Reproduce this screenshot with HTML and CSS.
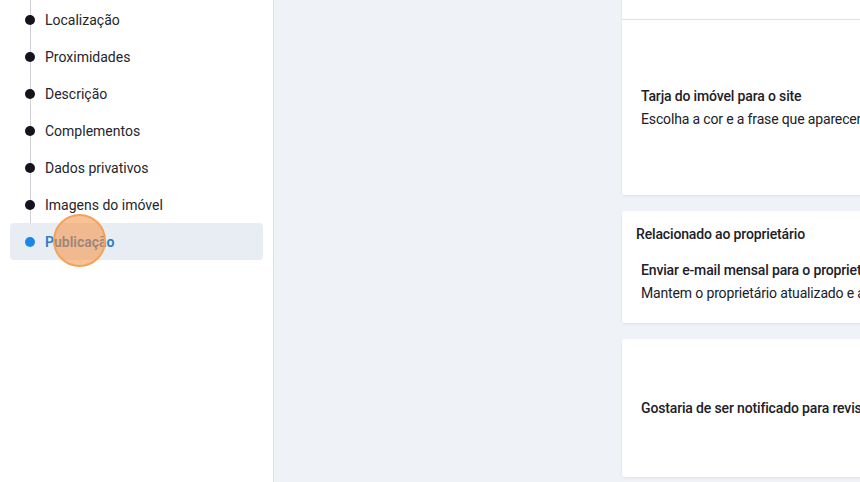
FILE: index.html
```html
<!DOCTYPE html>
<html lang="pt">
<head>
<meta charset="utf-8">
<link rel="stylesheet" href="styles.css">
</head>
<body>
<div class="app">
  <aside class="sidebar">
    <ul class="steps">
      <li class="step">Localização</li>
      <li class="step">Proximidades</li>
      <li class="step">Descrição</li>
      <li class="step">Complementos</li>
      <li class="step">Dados privativos</li>
      <li class="step">Imagens do imóvel</li>
      <li class="step active">Publicação</li>
    </ul>
    <span class="click-mark"></span>
  </aside>
  <main class="main">
    <section class="card card-top">
      <div class="card-head"><span class="cut-text">Destaque do imóvel no site e nos portais</span></div>
      <div class="card-body centered">
        <div class="option">
          <div class="opt-title">Tarja do imóvel para o site</div>
          <div class="opt-desc">Escolha a cor e a frase que aparecerá sobre a foto do imóvel</div>
        </div>
      </div>
    </section>
    <section class="card card-owner">
      <div class="section-title">Relacionado ao proprietário</div>
      <div class="option">
        <div class="opt-title">Enviar e-mail mensal para o proprietário</div>
        <div class="opt-desc">Mantem o proprietário atualizado e ativo</div>
      </div>
    </section>
    <section class="card card-notify centered">
      <div class="option">
        <div class="opt-title">Gostaria de ser notificado para revisar este imóvel?</div>
      </div>
    </section>
  </main>
</div>
</body>
</html>
```
FILE: styles.css
```css
* { box-sizing: border-box; }
html, body { margin: 0; padding: 0; }
body {
  width: 860px;
  height: 482px;
  overflow: hidden;
  font-family: Roboto, "Liberation Sans", sans-serif;
  color: #202028;
  background: #eff2f7;
}
.app {
  display: flex;
  height: 482px;
}
.sidebar {
  position: relative;
  width: 274px;
  flex: none;
  background: #fff;
  border-right: 1px solid #dcdfe4;
}
.steps {
  list-style: none;
  margin: 0;
  padding: 1px 10px 0;
}
.step {
  position: relative;
  display: flex;
  align-items: center;
  gap: 10px;
  height: 37px;
  padding-left: 15px;
  font-size: 14px;
  color: #25252c;
  border-radius: 4px;
}
.step::before {
  content: "";
  width: 10px;
  height: 10px;
  border-radius: 50%;
  background: #16131d;
  flex: none;
  position: relative;
  z-index: 1;
}
.step::after {
  content: "";
  position: absolute;
  left: 20px;
  top: 0;
  bottom: -18px;
  width: 1px;
  background: #cdd0d5;
}
.step:first-child::after { top: -2px; }
.step.active::after { display: none; }
.step.active {
  background: #e8edf4;
  color: #2f7cc4;
  font-weight: 600;
}
.step.active::before { background: #1a86e8; }
.click-mark {
  position: absolute;
  left: 53px;
  top: 214px;
  width: 53px;
  height: 53px;
  border-radius: 50%;
  background: rgba(245, 142, 60, 0.55);
  border: 2px solid #f4a25a;
}
.main {
  flex: 1;
  padding-left: 348px;
  display: flex;
  flex-direction: column;
  gap: 16px;
  overflow: hidden;
}
.card {
  background: #fff;
  width: 520px;
  box-shadow: 0 1px 3px rgba(30, 40, 60, 0.08);
  border-radius: 2px;
  letter-spacing: -0.15px;
}
.card-top {
  margin-top: -40px;
  height: 235px;
  display: flex;
  flex-direction: column;
}
.card-head {
  height: 60px;
  border-bottom: 1px solid #dfe1e4;
  padding: 24px 0 0 20px;
  font-size: 14px;
  color: #c4c4c4;
}
.cut-text { opacity: 0.4; }
.card-body {
  flex: 1;
}
.centered {
  display: flex;
  align-items: center;
}
.option {
  padding-left: 19px;
}
.opt-title {
  font-size: 14px;
  font-weight: 500;
  line-height: 23px;
  white-space: nowrap;
}
.opt-desc {
  font-size: 14px;
  line-height: 23px;
  white-space: nowrap;
}
.card-owner {
  height: 112px;
  padding-top: 12px;
}
.section-title {
  padding-left: 14px;
  font-size: 14px;
  font-weight: 500;
  line-height: 22px;
  margin-bottom: 14px;
}
.card-notify {
  height: 138px;
}
```
